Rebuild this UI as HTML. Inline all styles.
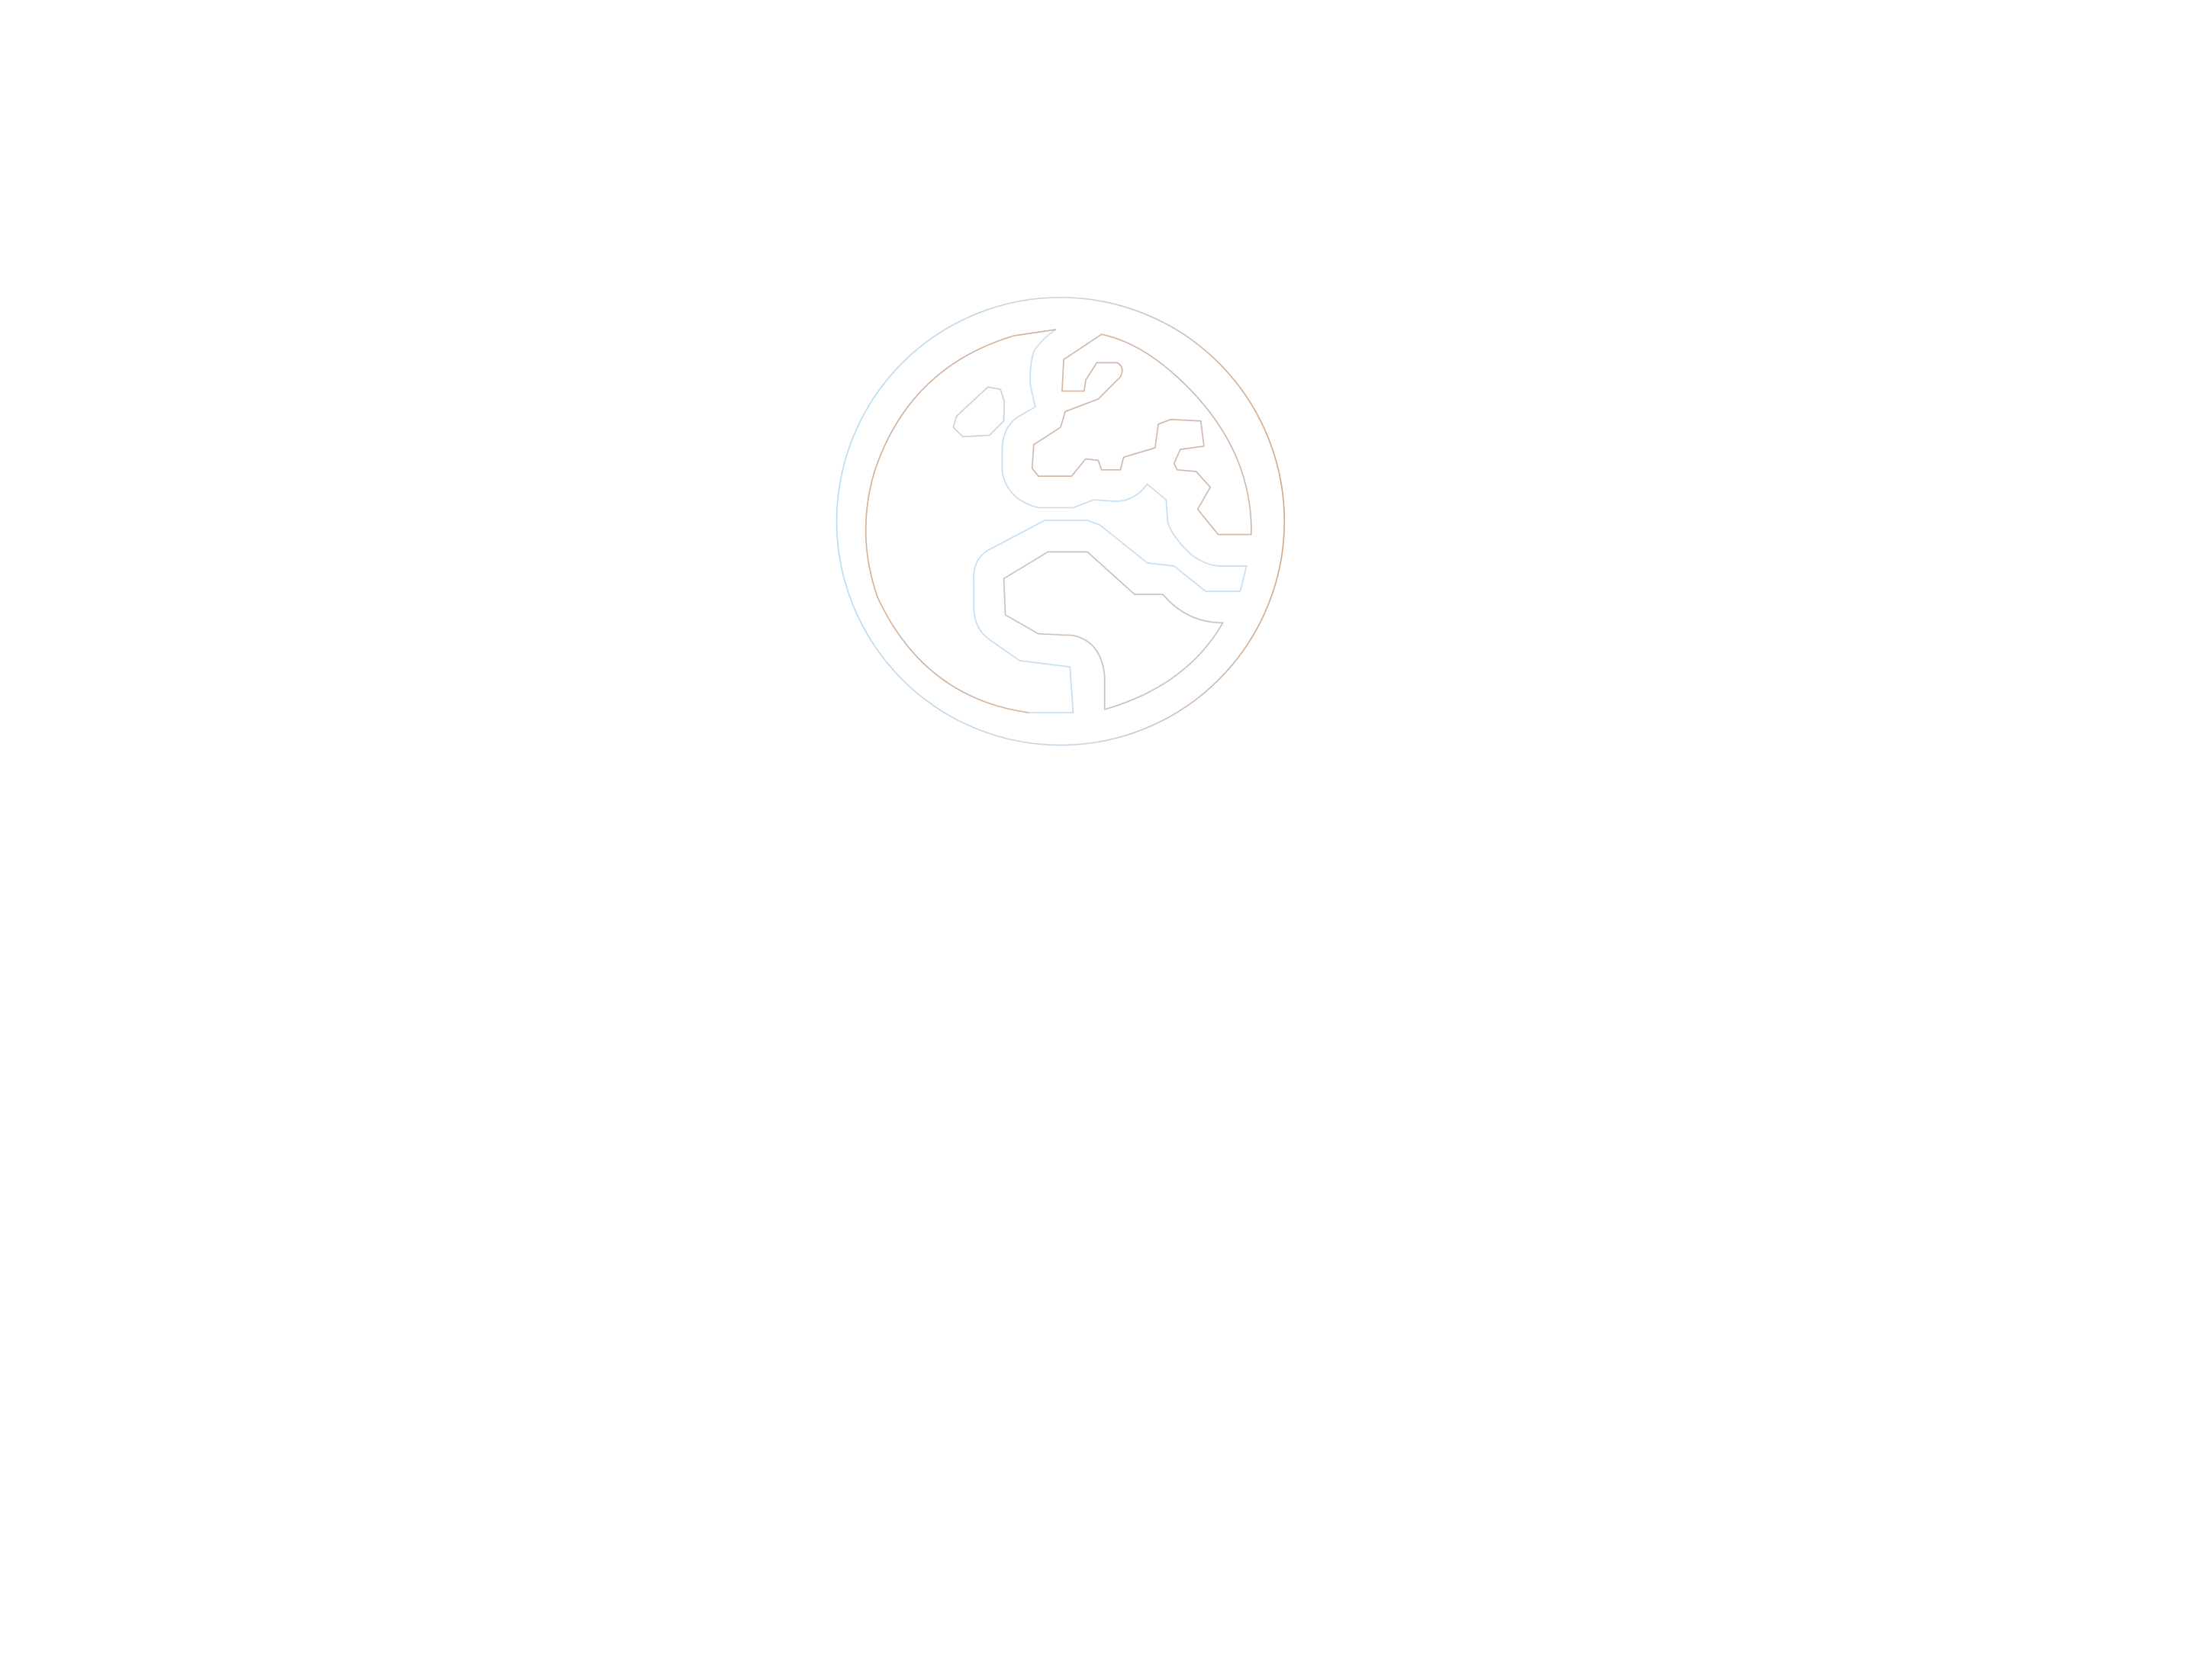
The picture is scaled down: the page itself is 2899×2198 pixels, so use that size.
<!DOCTYPE html>
<html><head><meta charset="utf-8"><style>html,body{margin:0;padding:0;background:#fff;width:2899px;height:2198px;overflow:hidden}svg{position:absolute;left:0;top:0}</style></head>
<body>
<svg width="2899" height="2198" viewBox="0 0 2899 2198">
<defs>
<linearGradient id="g1" x1="0" y1="0" x2="1" y2="0">
<stop offset="0" stop-color="#b8dcf2"/><stop offset="0.55" stop-color="#c9d4de"/><stop offset="1" stop-color="#d4a884"/>
</linearGradient>
</defs>
<g transform="translate(1080,370) scale(0.4132)" fill="none" stroke-width="4" stroke-linejoin="round">
<circle cx="750" cy="758" r="710" stroke="url(#g1)"/>
<path d="M735,150 Q690,180 665,220 Q650,270 655,330 L670,395 L610,430 Q570,460 565,520 L565,600 Q580,690 680,715 L790,715 L855,690 L930,695 Q990,690 1025,640 L1085,690 L1090,760 Q1100,800 1160,860 Q1210,900 1260,900 L1340,900 L1320,980 L1210,980 L1110,900 L1025,890 L875,770 L835,755 L700,755 L520,850 Q470,880 475,950 L475,1040 Q480,1100 520,1130 L620,1200 L780,1220 L790,1365 L650,1365" stroke="#c6def0"/>
<path d="M650,1365 Q320,1320 170,1000 Q100,800 160,600 Q270,270 600,170 L735,150" stroke="#d2b29a"/>
<path d="M880,165 L760,245 L755,345 L825,345 L830,310 L865,255 L930,255 Q955,270 940,300 L870,370 L765,410 L750,460 L665,515 L660,590 L680,615 L785,615 L830,560 L870,565 L880,595 L940,595 L950,555 L1050,525 L1060,450 L1100,435 L1195,440 L1205,520 L1130,530 L1110,575 L1120,595 L1180,600 L1225,650 L1185,720 L1250,800 L1355,800 Q1360,520 1120,300 Q1000,190 880,165 Z" stroke="#d0b8a8"/>
<path d="M520,332 L560,340 572,380 570,440 525,485 440,490 410,460 420,425 Z" stroke="#c8d2de"/>
<path d="M710,855 L835,855 L985,990 L1075,990 Q1150,1080 1265,1080 Q1150,1280 890,1355 L890,1250 Q880,1140 790,1120 L680,1115 L575,1055 L570,940 Z" stroke="#cfc0b4"/>
</g>
</svg>
</body></html>
